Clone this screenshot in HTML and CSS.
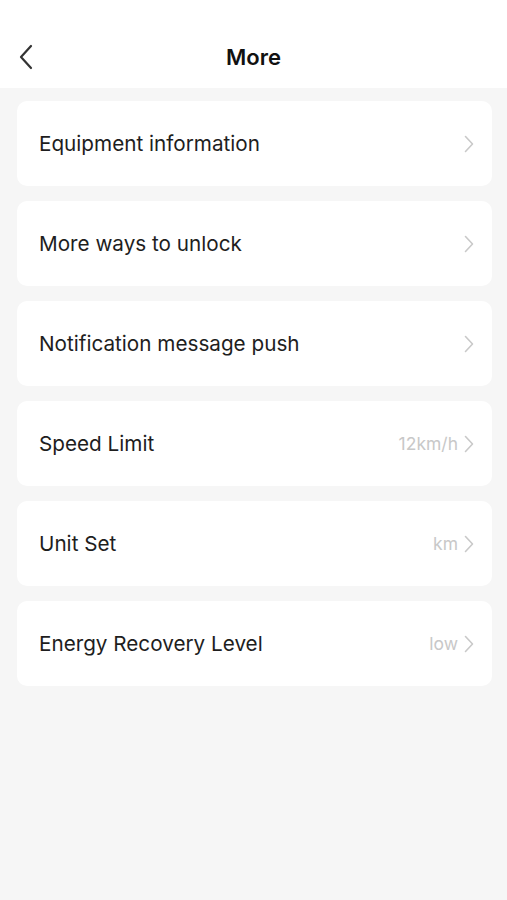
FILE: index.html
```html
<!DOCTYPE html>
<html>
<head>
<meta charset="utf-8">
<link rel="stylesheet" href="styles.css">
</head>
<body>
<div class="page">
  <header class="nav">
    <svg class="back" width="14" height="26" viewBox="0 0 14 26"><path d="M12 2 L2 13 L12 24" fill="none" stroke="#333" stroke-width="2.2" stroke-linecap="round" stroke-linejoin="round"/></svg>
    <h1 class="title">More</h1>
  </header>
  <main class="list">
    <div class="card"><span class="label">Equipment information</span><span class="right"><svg class="chev" width="10" height="18" viewBox="0 0 10 18"><path d="M1.5 1.5 L8.5 9 L1.5 16.5" fill="none" stroke="#c9c9c9" stroke-width="1.6" stroke-linecap="round" stroke-linejoin="round"/></svg></span></div>
    <div class="card"><span class="label">More ways to unlock</span><span class="right"><svg class="chev" width="10" height="18" viewBox="0 0 10 18"><path d="M1.5 1.5 L8.5 9 L1.5 16.5" fill="none" stroke="#c9c9c9" stroke-width="1.6" stroke-linecap="round" stroke-linejoin="round"/></svg></span></div>
    <div class="card"><span class="label">Notification message push</span><span class="right"><svg class="chev" width="10" height="18" viewBox="0 0 10 18"><path d="M1.5 1.5 L8.5 9 L1.5 16.5" fill="none" stroke="#c9c9c9" stroke-width="1.6" stroke-linecap="round" stroke-linejoin="round"/></svg></span></div>
    <div class="card"><span class="label">Speed Limit</span><span class="right"><span class="value">12km/h</span><svg class="chev" width="10" height="18" viewBox="0 0 10 18"><path d="M1.5 1.5 L8.5 9 L1.5 16.5" fill="none" stroke="#c9c9c9" stroke-width="1.6" stroke-linecap="round" stroke-linejoin="round"/></svg></span></div>
    <div class="card"><span class="label">Unit Set</span><span class="right"><span class="value">km</span><svg class="chev" width="10" height="18" viewBox="0 0 10 18"><path d="M1.5 1.5 L8.5 9 L1.5 16.5" fill="none" stroke="#c9c9c9" stroke-width="1.6" stroke-linecap="round" stroke-linejoin="round"/></svg></span></div>
    <div class="card"><span class="label">Energy Recovery Level</span><span class="right"><span class="value">low</span><svg class="chev" width="10" height="18" viewBox="0 0 10 18"><path d="M1.5 1.5 L8.5 9 L1.5 16.5" fill="none" stroke="#c9c9c9" stroke-width="1.6" stroke-linecap="round" stroke-linejoin="round"/></svg></span></div>
  </main>
</div>
</body>
</html>
```

FILE: styles.css
```css
html, body {
  margin: 0;
  padding: 0;
  background: #f6f6f6;
  font-family: Inter, "Liberation Sans", Arial, sans-serif;
}
.page {
  width: 507px;
  min-height: 900px;
  background: #f6f6f6;
}
.nav {
  height: 88px;
  background: #fff;
  display: flex;
  align-items: center;
  justify-content: center;
  position: relative;
  padding-top: 26px;
  box-sizing: border-box;
}
.back {
  position: absolute;
  left: 19px;
  top: 44px;
}
.title {
  margin: 0;
  font-size: 22px;
  font-weight: 600;
  color: #111;
}
.list {
  display: flex;
  flex-direction: column;
  gap: 15px;
  padding: 13px 15px 0 17px;
}
.card {
  height: 85px;
  background: #fff;
  border-radius: 10px;
  display: flex;
  align-items: center;
  justify-content: space-between;
  padding: 0 18px 0 22px;
}
.label {
  font-size: 20.7px;
  color: #1e1e1e;
}
.right {
  display: flex;
  align-items: center;
  gap: 6px;
}
.value {
  font-size: 17.5px;
  color: #c8c8c8;
}
.chev {
  display: block;
}
```
